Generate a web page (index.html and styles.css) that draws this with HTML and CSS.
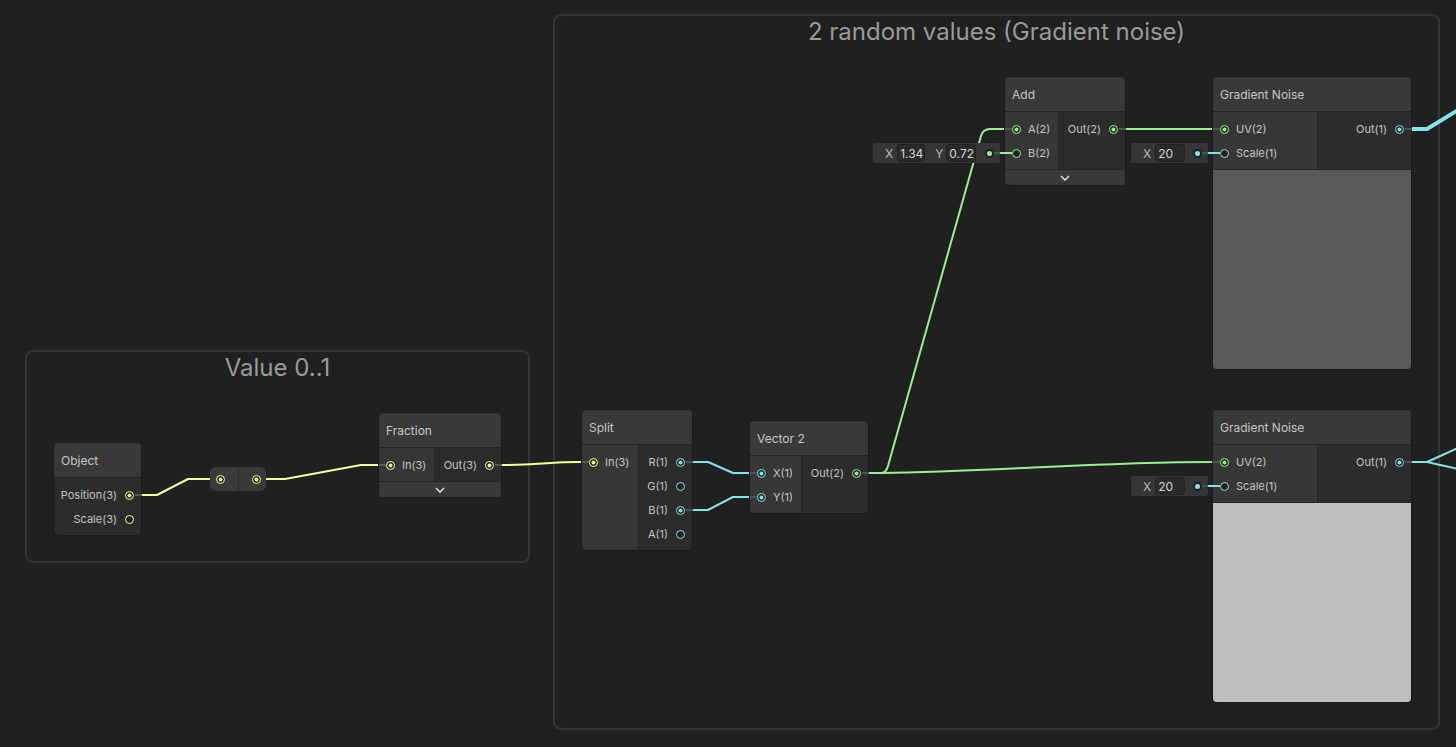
FILE: index.html
```html
<!DOCTYPE html>
<html>
<head>
<meta charset="utf-8">
<title>Shader Graph</title>
<link rel="stylesheet" href="styles.css">
</head>
<body>
<div class="canvas">
  <div class="group g-value"><div class="group-title">Value 0..1</div></div>
  <div class="group g-random"><div class="group-title">2 random values (Gradient noise)</div></div>

  <svg class="wires" width="1456" height="747" viewBox="0 0 1456 747">
    <g fill="none" stroke-width="2" stroke-linejoin="round" stroke-linecap="butt">
      <path stroke="#f6ff9a" d="M142,495 L157,495 L188,479 L210,479"/>
      <path stroke="#f6ff9a" d="M266,479 L285,479 L361,465 L378,465"/>
      <path stroke="#f6ff9a" d="M502,465 C540,465 545,462 581,462"/>
      <path stroke="#84e4e7" d="M693,462 L708,462 L733,473 L749,473"/>
      <path stroke="#84e4e7" d="M693,510 L708,510 L733,497 L749,497"/>
      <path stroke="#9aef92" d="M869,473 L881,473 Q886,473 888,466 L981,136 Q983,129 990,129 L1004,129"/>
      <path stroke="#9aef92" d="M869,473 L881,473 C1000,471 1100,462 1212,462"/>
      <path stroke="#9aef92" d="M1126,129 L1212,129"/>
      <path stroke="#84e4e7" stroke-width="4" d="M1412,129 L1427,129 L1458,110"/>
      <path stroke="#84e4e7" d="M1412,462 L1427,462 L1458,448"/>
      <path stroke="#84e4e7" d="M1427,462 L1458,469"/>
    </g>
  </svg>

  <!-- Object -->
  <div class="node n-object">
    <div class="node-title">Object</div>
    <div class="node-body">
      <div class="outputs">
        <div class="row"><span class="label">Position(3)</span><span class="port yellow on"></span></div>
        <div class="row"><span class="label">Scale(3)</span><span class="port yellow"></span></div>
      </div>
    </div>
  </div>

  <!-- Reroute -->
  <div class="reroute">
    <div class="rr-cell rr-in"><span class="port yellow on"></span></div>
    <div class="rr-cell rr-out"><span class="port yellow on"></span></div>
  </div>

  <!-- Fraction -->
  <div class="node n-fraction">
    <div class="node-title">Fraction</div>
    <div class="node-body">
      <div class="inputs">
        <div class="row"><span class="port yellow on"></span><span class="label">In(3)</span></div>
      </div>
      <div class="outputs">
        <div class="row"><span class="label">Out(3)</span><span class="port yellow on"></span></div>
      </div>
    </div>
    <div class="node-foot"><svg width="10" height="6" viewBox="0 0 10 6"><polyline points="1,1 5,5 9,1" fill="none" stroke="#dcdcdc" stroke-width="1.6"/></svg></div>
  </div>

  <!-- Split -->
  <div class="node n-split">
    <div class="node-title">Split</div>
    <div class="node-body">
      <div class="inputs">
        <div class="row"><span class="port yellow on"></span><span class="label">In(3)</span></div>
      </div>
      <div class="outputs">
        <div class="row"><span class="label">R(1)</span><span class="port cyan on"></span></div>
        <div class="row"><span class="label">G(1)</span><span class="port cyan"></span></div>
        <div class="row"><span class="label">B(1)</span><span class="port cyan on"></span></div>
        <div class="row"><span class="label">A(1)</span><span class="port cyan"></span></div>
      </div>
    </div>
  </div>

  <!-- Vector 2 -->
  <div class="node n-vec2">
    <div class="node-title">Vector 2</div>
    <div class="node-body">
      <div class="inputs">
        <div class="row"><span class="port cyan on"></span><span class="label">X(1)</span></div>
        <div class="row"><span class="port cyan on"></span><span class="label">Y(1)</span></div>
      </div>
      <div class="outputs">
        <div class="row"><span class="label">Out(2)</span><span class="port green on"></span></div>
      </div>
    </div>
  </div>

  <!-- Add -->
  <div class="node n-add">
    <div class="node-title">Add</div>
    <div class="node-body">
      <div class="inputs">
        <div class="row"><span class="port green on"></span><span class="label">A(2)</span></div>
        <div class="row">
          <div class="field w-add">
            <span class="fld-lbl">X</span><span class="fld-box b28">1.34</span>
            <span class="fld-lbl gap-l">Y</span><span class="fld-box b30">0.72</span>
            <span class="fld-dot green"></span>
          </div>
          <span class="port green fed"></span><span class="label">B(2)</span>
        </div>
      </div>
      <div class="outputs">
        <div class="row"><span class="label">Out(2)</span><span class="port green on"></span></div>
      </div>
    </div>
    <div class="node-foot"><svg width="10" height="6" viewBox="0 0 10 6"><polyline points="1,1 5,5 9,1" fill="none" stroke="#dcdcdc" stroke-width="1.6"/></svg></div>
  </div>

  <!-- Gradient Noise 1 -->
  <div class="node n-gn1">
    <div class="node-title">Gradient Noise</div>
    <div class="node-body">
      <div class="inputs">
        <div class="row"><span class="port green on"></span><span class="label">UV(2)</span></div>
        <div class="row">
          <div class="field w-scale">
            <span class="fld-lbl">X</span><span class="fld-box b30">20</span>
            <span class="fld-dot cyan"></span>
          </div>
          <span class="port cyan fed"></span><span class="label">Scale(1)</span>
        </div>
      </div>
      <div class="outputs">
        <div class="row"><span class="label">Out(1)</span><span class="port cyan on"></span></div>
      </div>
    </div>
    <div class="preview dark"></div>
  </div>

  <!-- Gradient Noise 2 -->
  <div class="node n-gn2">
    <div class="node-title">Gradient Noise</div>
    <div class="node-body">
      <div class="inputs">
        <div class="row"><span class="port green on"></span><span class="label">UV(2)</span></div>
        <div class="row">
          <div class="field w-scale">
            <span class="fld-lbl">X</span><span class="fld-box b30">20</span>
            <span class="fld-dot cyan"></span>
          </div>
          <span class="port cyan fed"></span><span class="label">Scale(1)</span>
        </div>
      </div>
      <div class="outputs">
        <div class="row"><span class="label">Out(1)</span><span class="port cyan on"></span></div>
      </div>
    </div>
    <div class="preview light"></div>
  </div>
</div>
</body>
</html>
```

FILE: styles.css
```css
* { box-sizing: border-box; }

html, body {
  margin: 0;
  padding: 0;
  background: #202020;
}

body {
  width: 1456px;
  height: 747px;
  overflow: hidden;
  font-family: Inter, "Noto Sans", "Liberation Sans", sans-serif;
}

.canvas {
  position: relative;
  width: 1456px;
  height: 747px;
  background: #202020;
  overflow: hidden;
}

/* Groups */
.group {
  position: absolute;
  border: 2px solid #353535;
  border-radius: 8px;
}
.group-title {
  text-align: center;
  font-size: 24px;
  line-height: 30px;
  padding-top: 1px;
  color: #9a9a9a;
}
.g-value { left: 25px; top: 350px; width: 505px; height: 213px; }
.g-random { left: 553px; top: 14px; width: 887px; height: 716px; }

.wires {
  position: absolute;
  left: 0;
  top: 0;
}

/* Nodes */
.node {
  position: absolute;
  background: #2c2c2c;
  border: 1px solid #1a1a1a;
  border-radius: 5px;
  color: #c4c4c4;
  font-size: 11px;
}
.node-title {
  height: 35px;
  border-bottom: 1px solid #242424;
  background: #393939;
  border-radius: 4px 4px 0 0;
  padding-left: 7px;
  display: flex;
  align-items: center;
  font-size: 12px;
  color: #c6c6c6;
}
.node-body { display: flex; }
.inputs {
  background: #373737;
  border-right: 1px solid #242424;
  padding: 5px 0 4px;
  flex: none;
}
.outputs {
  flex: 1;
  background: #2c2c2c;
  padding: 5px 0 4px;
}
.node-body:last-child > :first-child { border-bottom-left-radius: 4px; }
.node-body:last-child > :last-child { border-bottom-right-radius: 4px; }

.row {
  position: relative;
  height: 24px;
  display: flex;
  align-items: center;
  white-space: nowrap;
}
.inputs .row { padding-left: 7px; gap: 7px; }
.outputs .row { justify-content: flex-end; padding-right: 7px; gap: 8px; }

.node-foot {
  height: 16px;
  background: #393939;
  border-top: 1px solid #242424;
  border-radius: 0 0 4px 4px;
  display: flex;
  align-items: center;
  justify-content: center;
}

.preview {
  height: 200px;
  border-top: 1px solid #242424;
  border-radius: 0 0 4px 4px;
}
.preview.dark { background: #595959; }
.preview.light { background: #bebebe; }

/* Ports */
.port {
  position: relative;
  flex: none;
  width: 9px;
  height: 9px;
  border-radius: 50%;
  border: 1.5px solid currentColor;
  background: #222222;
}
.yellow { color: #f6ff9a; --dim: #5c5f45; }
.green { color: #9aef92; --dim: #465c45; }
.cyan { color: #84e4e7; --dim: #3d5a5b; }

.port.on {
  background: radial-gradient(circle, currentColor 0 1.7px, #222222 2.3px);
}
.port.on::before,
.port.fed::before {
  content: "";
  position: absolute;
  top: 50%;
  height: 2px;
  margin-top: -1px;
}
.inputs .port.on::before { right: calc(100% + 1.5px); width: 7px; background: var(--dim); }
.outputs .port.on::before { left: calc(100% + 1.5px); width: 7px; background: var(--dim); }
.inputs .port.fed::before { right: calc(100% + 1.5px); width: 12px; background: currentColor; }

/* Reroute */
.reroute {
  position: absolute;
  left: 210px;
  top: 467px;
  width: 56px;
  height: 24px;
  background: #3a3a3a;
  border-radius: 6px;
  display: flex;
}
.rr-cell { flex: 1; display: flex; align-items: center; }
.rr-in { padding-left: 6px; border-right: 1px solid #2a2a2a; }
.rr-out { justify-content: flex-end; padding-right: 5px; }

/* Inline fields */
.field {
  position: absolute;
  right: calc(100% + 5px);
  top: 2px;
  height: 20px;
  background: #363636;
  border-radius: 2px;
  display: flex;
  align-items: center;
  padding-left: 12px;
  font-size: 12px;
  color: #b8b8b8;
}
.w-add { width: 127px; }
.w-scale { width: 77px; }
.fld-lbl { margin-right: 4px; }
.fld-lbl.gap-l { margin-left: 10px; margin-right: 3px; }
.fld-box {
  height: 18px;
  padding: 0 2px;
  background: #2a2a2a;
  border: 1px solid #222222;
  border-radius: 3px;
  color: #d6d6d6;
  display: flex;
  align-items: center;
}
.b28 { width: 28px; }
.b30 { width: 30px; }
.fld-dot {
  position: relative;
  width: 5px;
  height: 5px;
  border-radius: 50%;
  background: currentColor;
  box-shadow: 0 0 0 2px #242424;
  margin-left: auto;
  margin-right: 8px;
}
.fld-dot::after {
  content: "";
  position: absolute;
  left: 7px;
  top: 1.5px;
  width: 6px;
  height: 2px;
  background: var(--dim);
}

/* Node positions on the canvas */
.n-object { left: 53px; top: 442px; width: 89px; }
.n-fraction { left: 378px; top: 412px; width: 124px; }
.n-fraction .inputs { width: 56px; }
.n-split { left: 581px; top: 409px; width: 112px; }
.n-split .inputs { width: 57px; }
.n-vec2 { left: 749px; top: 420px; width: 120px; }
.n-vec2 .inputs { width: 52px; }
.n-add { left: 1004px; top: 76px; width: 122px; }
.n-add .inputs { width: 54px; }
.n-gn1 { left: 1212px; top: 76px; width: 200px; }
.n-gn2 { left: 1212px; top: 409px; width: 200px; }
.n-gn1 .inputs, .n-gn2 .inputs { width: 105px; }
```
